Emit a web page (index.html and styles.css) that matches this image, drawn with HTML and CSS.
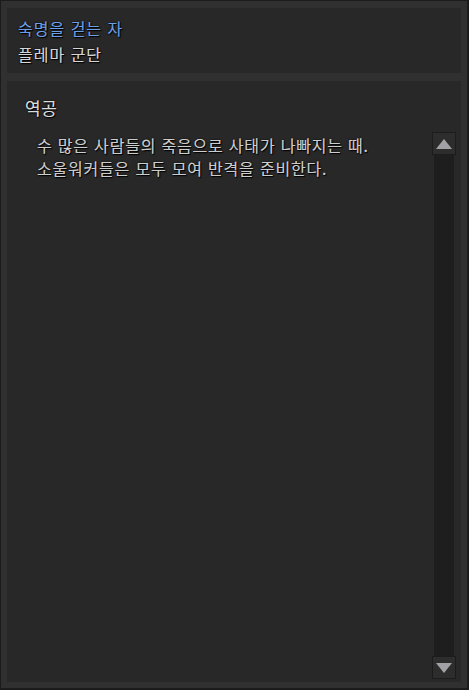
FILE: index.html
```html
<!DOCTYPE html>
<html lang="ko">
<head>
    <meta charset="UTF-8">
    <meta name="viewport" content="width=device-width, initial-scale=1.0">
    <title>숙명을 걷는 자</title>
    <link rel="stylesheet" href="styles.css">
</head>
<body>

<div class="frame">
    <!-- 칭호 정보 -->
    <div class="panel header">
        <div class="title">숙명을 걷는 자</div>
        <div class="subtitle">플레마 군단</div>
    </div>

    <!-- 설명 -->
    <div class="panel detail">
        <div class="heading">역공</div>
        <div class="content">
            <div class="text">
                <p>수 많은 사람들의 죽음으로 사태가 나빠지는 때.</p>
                <p>소울워커들은 모두 모여 반격을 준비한다.</p>
            </div>
            <div class="scrollbar">
                <div class="scroll-btn">
                    <svg width="16" height="10" viewBox="0 0 16 10"><polygon points="8,0 16,10 0,10" fill="#a2a2a6"/></svg>
                </div>
                <div class="scroll-track"></div>
                <div class="scroll-btn">
                    <svg width="16" height="10" viewBox="0 0 16 10"><polygon points="0,0 16,0 8,10" fill="#a2a2a6"/></svg>
                </div>
            </div>
        </div>
    </div>
</div>

</body>
</html>
```

FILE: styles.css
```css
body {
    margin: 0;
    background-color: #1b1b1b;
    font-family: "Noto Sans CJK KR", "Noto Sans", sans-serif;
}

.frame {
    width: 469px;
    height: 690px;
    box-sizing: border-box;
    border-style: solid;
    border-color: #1b1b1b;
    border-width: 1px 2px 2px 1px;
    background-color: #303030;
    padding: 7px 6px 6px 6px;
    display: flex;
    flex-direction: column;
    gap: 8px;
}

.panel {
    background-color: #282828;
}

.header {
    height: 65px;
    box-sizing: border-box;
    padding: 7px 11px 0;
    font-size: 16px;
    line-height: 26px;
    letter-spacing: 1px;
    text-shadow: 0 0 2px #000, 1px 1px 1px #000, 0 0 0.5px currentColor;
}

.title {
    color: #6c9fe6;
}

.subtitle {
    color: #d6d6d6;
}

.detail {
    flex: 1;
    display: flex;
    flex-direction: column;
    padding: 15px 5px 3px 18px;
    min-height: 0;
}

.heading {
    font-size: 17px;
    line-height: 24px;
    letter-spacing: 0.5px;
    color: #dcdcdc;
    text-shadow: 0 0 2px #000, 1px 1px 1px #000, 0 0 0.5px currentColor;
}

.content {
    flex: 1;
    display: flex;
    margin-top: 12px;
    min-height: 0;
}

.text {
    flex: 1;
    padding: 2px 0 0 12px;
    font-size: 16px;
    line-height: 23px;
    letter-spacing: 0.8px;
    color: #cdcdcd;
    text-shadow: 0 0 2px #000, 1px 1px 1px #000, 0 0 0.5px currentColor;
}

.text p {
    margin: 0;
}

/* 스크롤바 */
.scrollbar {
    width: 24px;
    display: flex;
    flex-direction: column;
    align-items: center;
}

.scroll-btn {
    width: 24px;
    height: 23px;
    box-sizing: border-box;
    border: 1px solid #1c1c1c;
    background-color: #2d2d2d;
    display: flex;
    align-items: center;
    justify-content: center;
}

.scroll-track {
    flex: 1;
    width: 20px;
    background-color: #1e1e1e;
}
```
